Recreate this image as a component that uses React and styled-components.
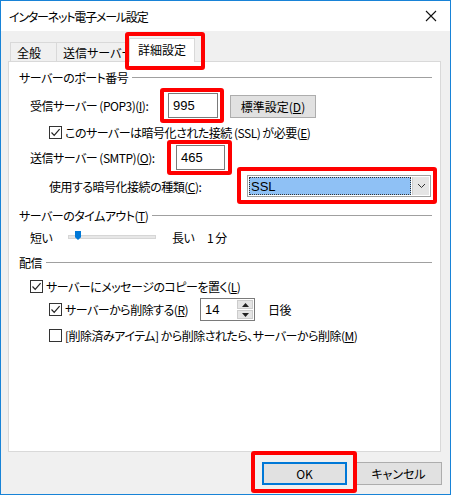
import React from "react";
import styled, { createGlobalStyle } from "styled-components";

const GlobalStyle = createGlobalStyle`
  html, body {
    margin: 0;
    padding: 0;
    background: #ffffff;
  }
  body {
    font-family: "Noto Sans CJK JP", "Liberation Sans", sans-serif;
    font-size: 12px;
    color: #000000;
    font-feature-settings: "palt";
    letter-spacing: -0.5px;
  }
`;

const Check = () => (
  <svg width="11" height="11" viewBox="0 0 11 11">
    <polyline points="1.5,5.5 4.2,8.3 9.6,2.2" fill="none" stroke="#222" strokeWidth="1.2" />
  </svg>
);

const App = () => {
  return (
    <>
      <GlobalStyle />
      <Window>
        <TitleBar>
          <Title>インターネット電子メール設定</Title>
          <CloseButton>
            <svg width="12" height="12" viewBox="0 0 12 12">
              <path d="M1 1 L11 11 M11 1 L1 11" stroke="#111" strokeWidth="1.1" />
            </svg>
          </CloseButton>
        </TitleBar>
        <Body>
          <TabStrip>
            <Tab $w={47}>全般</Tab>
            <Tab $w={80}>送信サーバー</Tab>
            <ActiveTab>詳細設定</ActiveTab>
          </TabStrip>
          <Panel>
            <GroupHeader $top={6}>
              <span>サーバーのポート番号</span>
              <Rule />
            </GroupHeader>
            <Row $top={7} $indent={11} $h={25}>
              <Label $w={138}>
                受信サーバー (POP3)(<u>I</u>):
              </Label>
              <TextBox $w={50}>995</TextBox>
              <Button $w={86}>
                標準設定(<u>D</u>)
              </Button>
            </Row>
            <Row $top={5} $indent={30} $h={18}>
              <Box>
                <Check />
              </Box>
              <CheckText>
                このサーバーは暗号化された接続 (SSL) が必要(<u>E</u>)
              </CheckText>
            </Row>
            <Row $top={4} $indent={11} $h={25}>
              <Label $w={146}>
                送信サーバー (SMTP)(<u>O</u>):
              </Label>
              <TextBox $w={49}>465</TextBox>
            </Row>
            <Row $top={5} $indent={30} $h={22}>
              <Label $w={198}>
                使用する暗号化接続の種類(<u>C</u>):
              </Label>
              <Select>
                <Selected>SSL</Selected>
                <SelectArrow>
                  <svg width="9" height="6" viewBox="0 0 9 6">
                    <polyline points="1,1 4.5,4.5 8,1" fill="none" stroke="#333" strokeWidth="1" />
                  </svg>
                </SelectArrow>
              </Select>
            </Row>
            <GroupHeader $top={9}>
              <span>
                サーバーのタイムアウト(<u>T</u>)
              </span>
              <Rule />
            </GroupHeader>
            <Row $top={4} $indent={11} $h={18}>
              <Label $w={38}>短い</Label>
              <Track>
                <Thumb />
              </Track>
              <Label $w={35} $left={16}>
                長い
              </Label>
              <span>1 分</span>
            </Row>
            <GroupHeader $top={7}>
              <span>配信</span>
              <Rule />
            </GroupHeader>
            <Row $top={6} $indent={11} $h={18}>
              <Box>
                <Check />
              </Box>
              <CheckText>
                サーバーにメッセージのコピーを置く(<u>L</u>)
              </CheckText>
            </Row>
            <Row $top={3} $indent={30} $h={23}>
              <Box>
                <Check />
              </Box>
              <CheckText $w={135}>
                サーバーから削除する(<u>R</u>)
              </CheckText>
              <Spinner>
                <SpinValue>14</SpinValue>
                <SpinButtons>
                  <SpinButton>
                    <svg width="7" height="4" viewBox="0 0 7 4">
                      <polygon points="0,4 3.5,0 7,4" fill="#222" />
                    </svg>
                  </SpinButton>
                  <SpinButton>
                    <svg width="7" height="4" viewBox="0 0 7 4">
                      <polygon points="0,0 3.5,4 7,0" fill="#222" />
                    </svg>
                  </SpinButton>
                </SpinButtons>
              </Spinner>
              <Label $left={13}>日後</Label>
            </Row>
            <Row $top={5} $indent={30} $h={18}>
              <Box />
              <CheckText>
                [削除済みアイテム] から削除されたら、サーバーから削除(<u>M</u>)
              </CheckText>
            </Row>
          </Panel>
          <Footer>
            <Button $w={85} $h={23} $primary>
              OK
            </Button>
            <Button $w={87} $h={23}>
              キャンセル
            </Button>
          </Footer>
        </Body>
        <Highlight $x={125} $y={32} $w={80} $h={38} />
        <Highlight $x={160} $y={88} $w={64} $h={35} />
        <Highlight $x={167} $y={140} $w={65} $h={35} />
        <Highlight $x={237} $y={167} $w={200} $h={37} />
        <Highlight $x={251} $y={451} $w={106} $h={42} />
      </Window>
    </>
  );
};

const Window = styled.div`
  position: relative;
  box-sizing: border-box;
  width: 451px;
  height: 495px;
  border: 1px solid #1883d7;
  background: #f0f0f0;
  display: flex;
  flex-direction: column;
  overflow: hidden;
`;

const TitleBar = styled.div`
  height: 30px;
  background: #ffffff;
  display: flex;
  align-items: center;
  justify-content: space-between;
  padding: 0 8px;
`;

const Title = styled.div`
  font-size: 12px;
  color: #000000;
  letter-spacing: -1.2px;
`;

const CloseButton = styled.div`
  width: 20px;
  display: flex;
  justify-content: center;
  align-items: center;
  margin-right: 1px;
`;

const Body = styled.div`
  flex: 1;
  display: flex;
  flex-direction: column;
`;

const TabStrip = styled.div`
  margin-top: 7px;
  height: 23px;
  padding-left: 9px;
  display: flex;
  align-items: flex-end;
`;

const Tab = styled.div`
  box-sizing: border-box;
  width: ${({ $w }) => $w}px;
  height: 19px;
  border: 1px solid #d9d9d9;
  border-bottom: none;
  margin-right: -1px;
  padding-left: 6px;
  display: flex;
  align-items: center;
  white-space: nowrap;
  overflow: hidden;
  background: #f0f0f0;
  letter-spacing: 0;
`;

const ActiveTab = styled.div`
  position: relative;
  z-index: 2;
  box-sizing: border-box;
  width: 66px;
  height: 24px;
  margin-left: -6px;
  margin-bottom: -1px;
  border: 1px solid #d9d9d9;
  border-bottom: none;
  background: #ffffff;
  display: flex;
  align-items: center;
  justify-content: center;
  padding-bottom: 2px;
  letter-spacing: 0;
`;

const Panel = styled.div`
  box-sizing: border-box;
  margin-left: 7px;
  width: 433px;
  height: 391px;
  background: #ffffff;
  border: 1px solid #d9d9d9;
  padding: 0 8px 0 10px;
  display: flex;
  flex-direction: column;
`;

const GroupHeader = styled.div`
  margin-top: ${({ $top }) => $top}px;
  height: 18px;
  display: flex;
  align-items: center;
  white-space: nowrap;
`;

const Rule = styled.div`
  flex: 1;
  height: 1px;
  background: #a0a0a0;
  margin-left: 4px;
  margin-top: 1px;
`;

const Row = styled.div`
  margin-top: ${({ $top }) => $top}px;
  margin-left: ${({ $indent }) => $indent}px;
  height: ${({ $h }) => $h}px;
  display: flex;
  align-items: center;
  white-space: nowrap;
`;

const Label = styled.span`
  ${({ $w }) => ($w ? `width: ${$w}px; flex-shrink: 0;` : "")}
  margin-left: ${({ $left }) => $left || 0}px;
`;

const TextBox = styled.div`
  box-sizing: border-box;
  width: ${({ $w }) => $w}px;
  height: 25px;
  border: 1px solid #7a7a7a;
  padding-left: 4px;
  display: flex;
  align-items: center;
  font-family: "Liberation Sans", "Noto Sans CJK JP", sans-serif;
  font-size: 13px;
  letter-spacing: 0;
`;

const Button = styled.div`
  box-sizing: border-box;
  width: ${({ $w }) => $w}px;
  height: ${({ $h }) => $h || 23}px;
  margin-left: ${({ $primary }) => ($primary ? 0 : 12)}px;
  background: #e1e1e1;
  border: ${({ $primary }) => ($primary ? "2px solid #0078d7" : "1px solid #adadad")};
  display: flex;
  align-items: center;
  justify-content: center;
  margin-top: 2px;
  letter-spacing: 0;
`;

const Box = styled.div`
  box-sizing: border-box;
  width: 13px;
  height: 13px;
  border: 1px solid #333333;
  background: #ffffff;
  display: flex;
  align-items: center;
  justify-content: center;
  flex-shrink: 0;
`;

const CheckText = styled.span`
  margin-left: 3px;
  ${({ $w }) => ($w ? `width: ${$w}px; flex-shrink: 0;` : "")}
`;

const Select = styled.div`
  box-sizing: border-box;
  width: 184px;
  height: 22px;
  border: 1px solid #a0a0a0;
  background: #ffffff;
  padding: 1px;
  display: flex;
`;

const Selected = styled.div`
  flex: 1;
  background: #8fc1f5;
  outline: 1px dotted #333;
  outline-offset: -1px;
  display: flex;
  align-items: center;
  padding-left: 2px;
  font-family: "Liberation Sans", sans-serif;
  font-size: 13px;
  letter-spacing: 0;
`;

const SelectArrow = styled.div`
  width: 16px;
  margin-left: 1px;
  background: #e5e5e5;
  border-left: 1px solid #cfcfcf;
  display: flex;
  align-items: center;
  justify-content: center;
`;

const Track = styled.div`
  position: relative;
  box-sizing: border-box;
  width: 88px;
  height: 4px;
  background: #e7e7e7;
  border: 1px solid #d6d6d6;
  flex-shrink: 0;
`;

const Thumb = styled.div`
  position: absolute;
  left: 6px;
  top: -5px;
  width: 6px;
  height: 9px;
  background: #0078d7;
  clip-path: polygon(0 0, 100% 0, 100% 70%, 50% 100%, 0 70%);
`;

const Spinner = styled.div`
  box-sizing: border-box;
  width: 55px;
  height: 23px;
  border: 1px solid #7a7a7a;
  display: flex;
  background: #ffffff;
`;

const SpinValue = styled.div`
  flex: 1;
  display: flex;
  align-items: center;
  padding-left: 4px;
  font-family: "Liberation Sans", sans-serif;
  font-size: 13px;
  letter-spacing: 0;
`;

const SpinButtons = styled.div`
  width: 16px;
  display: flex;
  flex-direction: column;
  gap: 1px;
  padding: 1px 1px 1px 0;
`;

const SpinButton = styled.div`
  flex: 1;
  background: #e5e5e5;
  border: 1px solid #cccccc;
  display: flex;
  align-items: center;
  justify-content: center;
`;

const Footer = styled.div`
  margin-top: 8px;
  padding-right: 8px;
  display: flex;
  justify-content: flex-end;
  gap: 8px;
  & > div {
    margin-left: 0;
  }
`;

const Highlight = styled.div`
  position: absolute;
  left: ${({ $x }) => $x - 1}px;
  top: ${({ $y }) => $y - 1}px;
  width: ${({ $w }) => $w}px;
  height: ${({ $h }) => $h}px;
  box-sizing: border-box;
  border: 4px solid #ff0000;
  border-radius: 3px;
  z-index: 5;
  pointer-events: none;
`;

export default App;
